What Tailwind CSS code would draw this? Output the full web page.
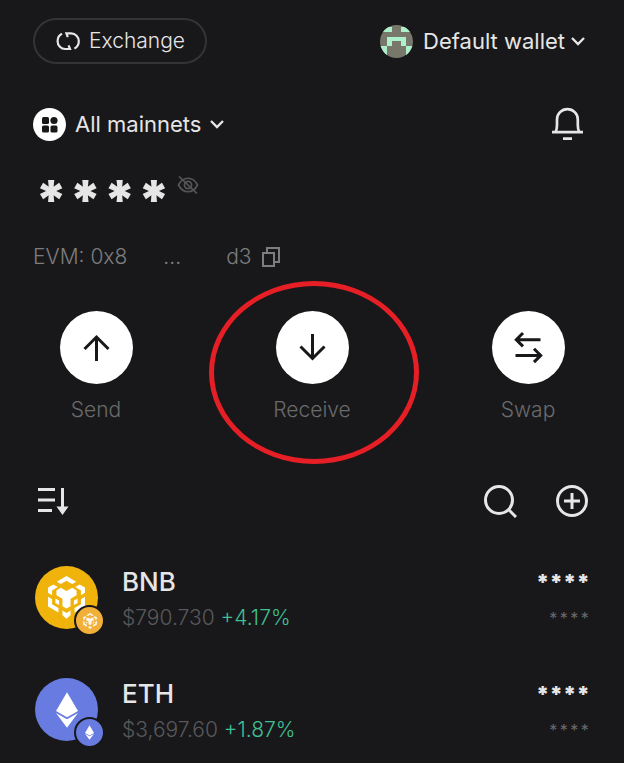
<!DOCTYPE html>
<html lang="en">
<head>
<meta charset="utf-8">
<meta name="viewport" content="width=device-width, initial-scale=1">
<title>Wallet</title>
<script src="https://cdn.jsdelivr.net/npm/@tailwindcss/browser@4"></script>
</head>
<body class="min-h-screen bg-[#18181a] font-['Inter','Liberation_Sans',sans-serif] text-[22px] leading-7 text-[#e6e6e6]">
<svg class="hidden" aria-hidden="true">
  <symbol id="bnb" viewBox="0 0 110 128">
    <path d="M55 0 84 17 72 24 55 14 38 24 26 17ZM16 25 29 33 12 43V57L0 50V34ZM94 25 81 33 98 43V57L110 50V34ZM25 43 38 35 55 45 72 35 85 43V57L67 68V90L55 97 43 90V68L25 57ZM0 62 12 69V84L31 95V109L0 91ZM110 62 98 69V84L79 95V109L110 91ZM22 67 33 73V86L22 80ZM88 67 77 73V86L88 80ZM43 103 55 110 67 103V117L55 127 43 117Z"/>
  </symbol>
  <symbol id="eth" viewBox="0 0 66 106">
    <path d="M33 0 66 56 33 75 0 56Z"/><path d="M0 62 33 81 66 62 33 106Z"/>
  </symbol>
</svg>
<main class="flex flex-col pt-[18px]">
  <header class="flex items-center justify-between pr-[38px] pl-[33px]">
    <button class="flex h-[46px] items-center gap-2 rounded-full border-2 border-[#343436] px-5 text-[21px] font-light">
      <svg class="size-[26px]" viewBox="0 0 26 26" fill="none" stroke="currentColor" stroke-width="2.2" aria-hidden="true"><path d="M7 5.800C4.200 7.200 2.600 10 2.600 13.200C2.600 17.500 6 21 10.200 21H15L13.600 17.300M19.400 20.600C22.200 19 23.800 16.400 23.800 13.200C23.800 8.900 20.400 5.400 16.200 5.400H11.400L12.800 9.100"/></svg>
      Exchange
    </button>
    <button class="flex items-center">
      <svg class="mr-[10px] size-[33px] rounded-full" viewBox="0 0 33 33" aria-hidden="true"><path fill="#78786a" d="M0 0H33V33H0Z"/><path fill="#aef0cb" d="M2 2H12V7H2ZM21 2H31V7H21ZM7 12H26V21H21V16H12V21H7ZM0 21H7V31H2V26H0ZM26 21H33V26H31V31H26Z"/></svg>
      Default wallet
      <svg class="ml-[5px] h-4 w-4" viewBox="0 0 16 16" fill="none" stroke="currentColor" stroke-width="2.400" aria-hidden="true"><path d="M2 5 8 11 14 5"/></svg>
    </button>
  </header>

  <div class="mt-[43px] flex items-center justify-between pr-10 pl-[33px]">
    <button class="flex items-center">
      <svg class="mr-[9px] size-[33px]" viewBox="0 0 33 33" aria-hidden="true"><circle cx="16.500" cy="16.500" r="16.500" fill="#fff"/><g fill="#18181a"><rect x="9" y="9" width="7" height="7" rx="1.500"/><circle cx="21" cy="12.500" r="3.600"/><rect x="9" y="17.500" width="7" height="7" rx="1.500"/><rect x="17.500" y="17.500" width="7" height="7" rx="1.500"/></g></svg>
      All mainnets
      <svg class="ml-2 h-4 w-4" viewBox="0 0 16 16" fill="none" stroke="currentColor" stroke-width="2.400" aria-hidden="true"><path d="M2 5 8 11 14 5"/></svg>
    </button>
    <button aria-label="Notifications">
      <svg class="h-[34px] w-8" viewBox="0 0 32 34" fill="none" stroke="currentColor" stroke-width="2.700" aria-hidden="true"><path d="M3.500 25C4.700 23 5 21 5 18V12.500A10.400 10.400 0 0 1 25.800 12.500V18C25.800 21 26.100 23 27.300 25M0 25.200H31M11 31.700H20"/></svg>
    </button>
  </div>

  <div class="mt-[26px] flex h-12 items-start px-[34px]">
    <p class="flex h-12 w-[137px] justify-around text-[54px] leading-[66px] font-black"><span>*</span><span>*</span><span>*</span><span>*</span></p>
    <button class="mt-[9px] ml-[6px] text-[#555557]" aria-label="Show balance">
      <svg class="h-[18px] w-[22px]" viewBox="0 0 22 18" fill="none" stroke="currentColor" stroke-width="1.700" aria-hidden="true"><path d="M1.500 9C6 0 16 0 20.500 9C16 18 6 18 1.500 9ZM2 .5 20 17.500"/><circle cx="11" cy="9" r="3.600"/></svg>
    </button>
  </div>

  <div class="mt-7 flex items-center px-[33px] text-[21px] font-light text-[#7d7d7f]">
    <span>EVM: 0x8</span><span class="ml-9">...</span><span class="ml-[45px]">d3</span>
    <button class="ml-[9px]" aria-label="Copy address">
      <svg class="size-5" viewBox="0 0 20 20" fill="none" stroke="currentColor" stroke-width="2" aria-hidden="true"><path d="M2 6H13V19H2ZM6 6V1H18V15H13"/></svg>
    </button>
  </div>

  <nav class="mt-10 flex justify-between px-[57px] text-[21px] font-light text-[#6a6a6c]" aria-label="Actions">
    <button class="flex w-[78px] flex-col items-center gap-3">
      <svg class="size-[73px]" viewBox="0 0 73 73" fill="none" stroke="#18181a" stroke-width="3" aria-hidden="true"><circle cx="36.500" cy="36.500" r="36.500" fill="#fff" stroke="none"/><path d="M36.500 50V26M24.500 38 36.500 26 48.500 38"/></svg>
      Send
    </button>
    <button class="relative flex w-[78px] flex-col items-center gap-3">
      <svg class="size-[73px]" viewBox="0 0 73 73" fill="none" stroke="#18181a" stroke-width="3" aria-hidden="true"><circle cx="36.500" cy="36.500" r="36.500" fill="#fff" stroke="none"/><path d="M36.500 23V47M24.500 35.500 36.500 47.500 48.500 35.500"/></svg>
      Receive
      <span class="pointer-events-none absolute top-[-30px] left-[-64px] h-[183px] w-[210px] rounded-[50%] border-[5px] border-[#e61e25]"></span>
    </button>
    <button class="flex w-[78px] flex-col items-center gap-3">
      <svg class="size-[73px]" viewBox="0 0 73 73" fill="none" stroke="#18181a" stroke-width="3" aria-hidden="true"><circle cx="36.500" cy="36.500" r="36.500" fill="#fff" stroke="none"/><path d="M48.500 28.700H24.500M31 22 24.300 28.700 31 35.400M23.500 44.400H48M42 37.700 48.700 44.400 42 51.100"/></svg>
      Swap
    </button>
  </nav>

  <div class="mt-[60px] flex items-center justify-between px-[35px]">
    <button aria-label="Sort">
      <svg class="h-[34px] w-[34px]" viewBox="0 0 34 34" fill="none" stroke="currentColor" stroke-width="3" aria-hidden="true"><path d="M3 5.500H20M3 16H20M3 26.500H17M27.500 4V27"/><path d="M21.500 22.500H33.500L27.500 31Z" fill="currentColor" stroke="none"/></svg>
    </button>
    <div class="flex gap-[38px]">
      <button aria-label="Search"><svg class="size-[34px]" viewBox="0 0 34 34" fill="none" stroke="currentColor" stroke-width="3" aria-hidden="true"><circle cx="16" cy="16" r="13.500"/><path d="M25.500 25.500 33 33"/></svg></button>
      <button aria-label="Add token"><svg class="size-[34px]" viewBox="0 0 34 34" fill="none" stroke="currentColor" stroke-width="3" aria-hidden="true"><circle cx="17" cy="17" r="14.500"/><path d="M17 9V25M9 17H25"/></svg></button>
    </div>
  </div>

  <ul class="mt-12 flex flex-col gap-10 pr-[34px] pl-[35px]">
    <li class="flex h-[72px] items-start">
      <div class="relative mr-6 flex size-[63px] items-center justify-center rounded-full bg-[#efb30c]">
        <svg class="h-[43px] w-[37px] fill-white" aria-hidden="true"><use href="#bnb"/></svg>
        <span class="absolute top-[39px] left-[39px] flex size-[31px] items-center justify-center rounded-full border-2 border-[#18181a] bg-[#f0b03a]"><svg class="h-4 w-[14px] fill-white/90" aria-hidden="true"><use href="#bnb"/></svg></span>
      </div>
      <div class="flex flex-1 flex-col gap-[6px]">
        <h2 class="text-[26px] leading-8 font-medium">BNB</h2>
        <p class="text-[21px] font-light text-[#59595b]">$790.730 <span class="text-[#3fbf92]">+4.17%</span></p>
      </div>
      <div class="flex flex-col items-end gap-[6px]">
        <p class="flex h-8 w-[54px] justify-around text-[22px] leading-8 font-black"><span>*</span><span>*</span><span>*</span><span>*</span></p>
        <p class="flex h-7 w-[42px] justify-around text-[16px] leading-7 text-[#69696b]"><span>*</span><span>*</span><span>*</span><span>*</span></p>
      </div>
    </li>
    <li class="flex h-[72px] items-start">
      <div class="relative mr-6 flex size-[63px] items-center justify-center rounded-full bg-[#677be0]">
        <svg class="h-9 w-[22px] fill-white" aria-hidden="true"><use href="#eth"/></svg>
        <span class="absolute top-[39px] left-[39px] flex size-[31px] items-center justify-center rounded-full border-2 border-[#18181a] bg-[#677be0]"><svg class="h-[15px] w-[9px] fill-white" aria-hidden="true"><use href="#eth"/></svg></span>
      </div>
      <div class="flex flex-1 flex-col gap-[6px]">
        <h2 class="text-[26px] leading-8 font-medium">ETH</h2>
        <p class="text-[21px] font-light text-[#59595b]">$3,697.60 <span class="text-[#3fbf92]">+1.87%</span></p>
      </div>
      <div class="flex flex-col items-end gap-[6px]">
        <p class="flex h-8 w-[54px] justify-around text-[22px] leading-8 font-black"><span>*</span><span>*</span><span>*</span><span>*</span></p>
        <p class="flex h-7 w-[42px] justify-around text-[16px] leading-7 text-[#69696b]"><span>*</span><span>*</span><span>*</span><span>*</span></p>
      </div>
    </li>
  </ul>
</main>
</body>
</html>
